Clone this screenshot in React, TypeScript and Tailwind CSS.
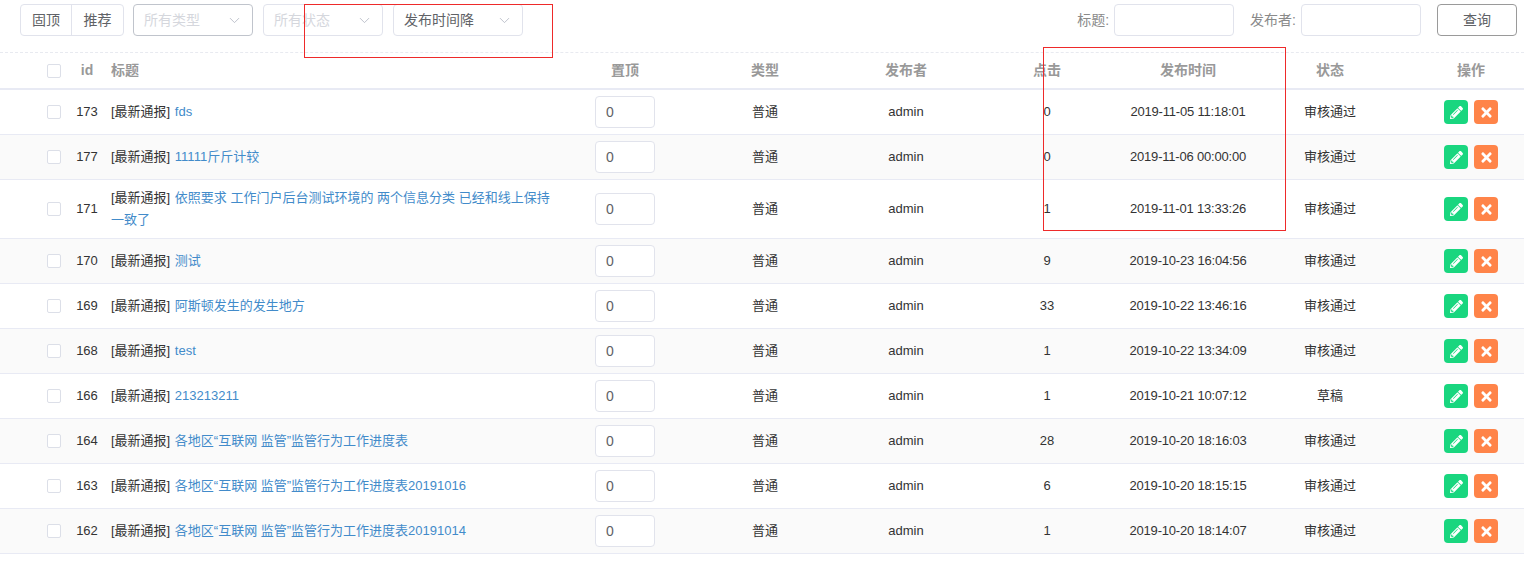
import { ChevronDown } from "lucide-react";
import { FaPencilAlt, FaTimes } from "react-icons/fa";

const rows = [
  { id: 173, title: "fds", click: 0, time: "2019-11-05 11:18:01", status: "审核通过" },
  { id: 177, title: "11111斤斤计较", click: 0, time: "2019-11-06 00:00:00", status: "审核通过" },
  { id: 171, title: "依照要求 工作门户后台测试环境的 两个信息分类 已经和线上保持一致了", click: 1, time: "2019-11-01 13:33:26", status: "审核通过" },
  { id: 170, title: "测试", click: 9, time: "2019-10-23 16:04:56", status: "审核通过" },
  { id: 169, title: "阿斯顿发生的发生地方", click: 33, time: "2019-10-22 13:46:16", status: "审核通过" },
  { id: 168, title: "test", click: 1, time: "2019-10-22 13:34:09", status: "审核通过" },
  { id: 166, title: "213213211", click: 1, time: "2019-10-21 10:07:12", status: "草稿" },
  { id: 164, title: "各地区“互联网 监管”监管行为工作进度表", click: 28, time: "2019-10-20 18:16:03", status: "审核通过" },
  { id: 163, title: "各地区“互联网 监管”监管行为工作进度表20191016", click: 6, time: "2019-10-20 18:15:15", status: "审核通过" },
  { id: 162, title: "各地区“互联网 监管”监管行为工作进度表20191014", click: 1, time: "2019-10-20 18:14:07", status: "审核通过" },
];

function Select({ label, width, dim, dark }: { label: string; width: string; dim?: boolean; dark?: boolean }) {
  return (
    <div
      className={`${width} h-[32px] flex items-center justify-between pl-[10px] pr-[9px] rounded-[4px] border bg-white text-[14px] ${
        dark ? "border-[#c0c4cc]" : "border-[#e1e3ec]"
      } ${dim ? "text-[#d5d7dd]" : "text-[#606266]"}`}
    >
      <span>{label}</span>
      <ChevronDown size={17} strokeWidth={1.2} className="text-[#b4b8c4]" />
    </div>
  );
}

function Check() {
  return <span className="inline-block align-middle w-[14px] h-[14px] rounded-[2px] border border-[#dcdfe8] bg-white" />;
}

const th = "font-bold text-[14px] text-[#999999] text-center h-[37px] border-b-2 border-[#e8eaf4] p-0";
const td = "text-center border-b border-[#e8eaf4] p-0";
const cell = `${td} pb-[1px]`;

export default function App() {
  return (
    <div className="relative w-[1524px] h-[580px] bg-white overflow-hidden text-[13px] text-[#333333] font-['Liberation_Sans','Noto_Sans_CJK_SC',sans-serif]">
      <div className="h-[53px] border-b border-dashed border-[#e8eaf0] pt-[4px] pl-[20px] pr-[7px] flex items-start text-[14px]">
        <div className="flex h-[32px] w-[104px] rounded-[4px] border border-[#e1e3ec] text-[#606266]">
          <span className="w-[51px] flex items-center justify-center border-r border-[#e1e3ec]">固顶</span>
          <span className="flex-1 flex items-center justify-center">推荐</span>
        </div>
        <div className="flex gap-[10px] ml-[9px]">
          <Select label="所有类型" width="w-[120px]" dim dark />
          <Select label="所有状态" width="w-[120px]" dim />
          <Select label="发布时间降" width="w-[130px]" />
        </div>
        <div className="ml-auto flex items-center text-[#8a8a8a]">
          <label>标题:</label>
          <div className="ml-[5px] w-[120px] h-[32px] rounded-[4px] border border-[#e1e3ec]" />
          <label className="ml-[16px]">发布者:</label>
          <div className="ml-[5px] w-[120px] h-[32px] rounded-[4px] border border-[#e1e3ec]" />
          <button className="ml-[16px] w-[80px] h-[32px] rounded-[4px] border border-[#9a9a9a] text-[#606266]">查询</button>
        </div>
      </div>

      <table className="w-[1524px] table-fixed border-separate border-spacing-0">
        <colgroup>
          <col className="w-[72px]" />
          <col className="w-[30px]" />
          <col className="w-[458px]" />
          <col className="w-[130px]" />
          <col className="w-[150px]" />
          <col className="w-[132px]" />
          <col className="w-[150px]" />
          <col className="w-[132px]" />
          <col className="w-[152px]" />
          <col className="w-[118px]" />
        </colgroup>
        <thead>
          <tr>
            <th className={`${th} pl-[36px]`}><Check /></th>
            <th className={th}>id</th>
            <th className={`${th} !text-left pl-[9px]`}>标题</th>
            <th className={th}>置顶</th>
            <th className={th}>类型</th>
            <th className={th}>发布者</th>
            <th className={th}>点击</th>
            <th className={th}>发布时间</th>
            <th className={th}>状态</th>
            <th className={`${th} pl-[12px]`}>操作</th>
          </tr>
        </thead>
        <tbody>
          {rows.map((r, i) => (
            <tr key={r.id} className={i % 2 === 1 ? "bg-[#fafafa]" : "bg-white"}>
              <td className={`${td} pb-[2px] pl-[36px]`}><Check /></td>
              <td className={cell}>{r.id}</td>
              <td className={`${td} !text-left pl-[9px] pr-[6px] pt-[6.5px] pb-[7.5px] leading-[22px] [word-spacing:1px]`}>
                [最新通报] <span className="text-[#428bca] [word-spacing:0px]">{r.title}</span>
              </td>
              <td className={`${td} py-[6px]`}>
                <input
                  readOnly
                  value="0"
                  className="w-[60px] h-[32px] pl-[10px] rounded-[4px] border border-[#e1e3ec] bg-white text-[14px] text-[#606266] align-middle"
                />
              </td>
              <td className={cell}>普通</td>
              <td className={cell}>admin</td>
              <td className={cell}>{r.click}</td>
              <td className={`${cell} tracking-[-0.2px]`}>{r.time}</td>
              <td className={cell}>{r.status}</td>
              <td className={td}>
                <div className="flex justify-end gap-[6px] pr-[26px]">
                  <span className="w-[24px] h-[24px] rounded-[4px] bg-[#19d67f] flex items-center justify-center text-white">
                    <FaPencilAlt size={13} />
                  </span>
                  <span className="w-[24px] h-[24px] rounded-[4px] bg-[#ff8449] flex items-center justify-center text-white">
                    <FaTimes size={15} />
                  </span>
                </div>
              </td>
            </tr>
          ))}
        </tbody>
      </table>

      <div className="absolute left-[304px] top-[4px] w-[249px] h-[54px] border border-[#ee2a2a] pointer-events-none" />
      <div className="absolute left-[1043px] top-[47px] w-[243px] h-[184px] border border-[#ee2a2a] pointer-events-none" />
    </div>
  );
}
